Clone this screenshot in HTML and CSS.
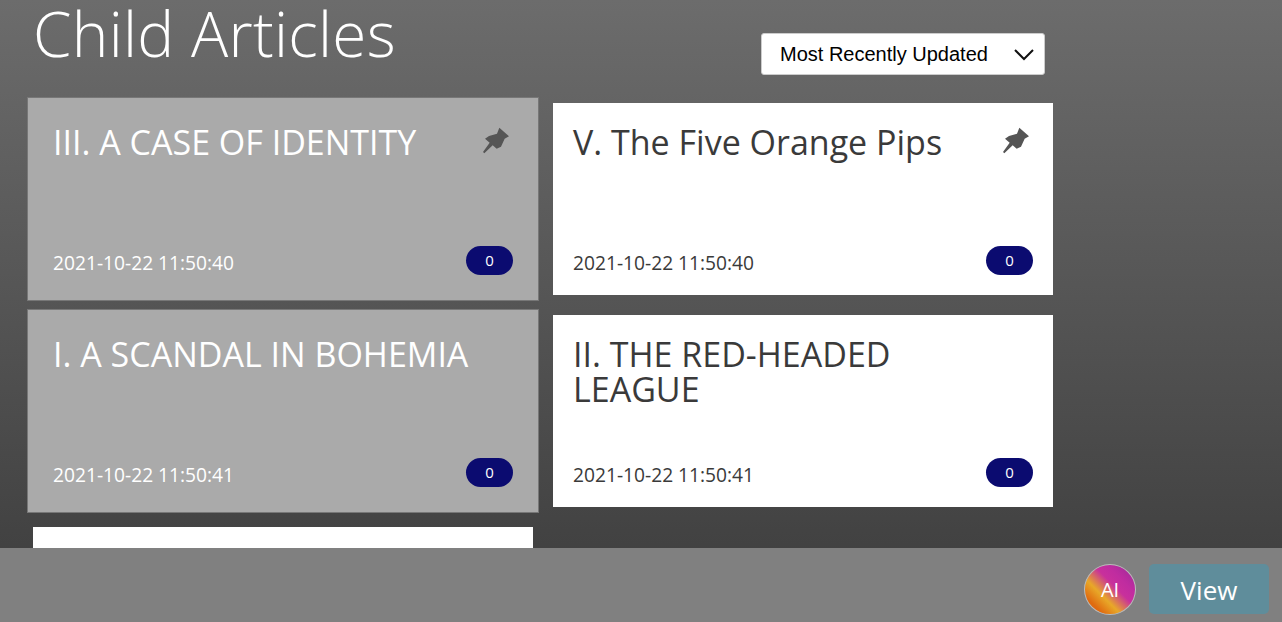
FILE: index.html
```html
<!DOCTYPE html>
<html lang="en">
<head>
    <meta charset="UTF-8">
    <meta name="viewport" content="width=device-width, initial-scale=1.0">
    <title>Child Articles</title>
    <link rel="stylesheet" href="styles.css">
</head>
<body>
    <svg class="icon-defs" width="0" height="0">
        <symbol id="pin" viewBox="65 50 84 81">
            <path d="M117 52L146 78L133 85L122 109L109 115L97 105L72 129L68 125L88 97L74 85L86 77L110 70Z"/>
        </symbol>
    </svg>
    <main class="content">
        <div class="top-row">
            <h1>Child Articles</h1>
            <div class="sort">
                <select class="sort-select">
                    <option>Most Recently Updated</option>
                </select>
                <svg class="chevron" viewBox="0 0 20 12"><path d="M1 1l9 9 9-9"/></svg>
            </div>
        </div>
        <div class="cards">
            <div class="card active">
                <div class="card-head">
                    <h2>III. A CASE OF IDENTITY</h2>
                    <svg class="pin"><use href="#pin"/></svg>
                </div>
                <div class="card-foot">
                    <span class="date">2021-10-22 11:50:40</span>
                    <span class="badge">0</span>
                </div>
            </div>
            <div class="card">
                <div class="card-head">
                    <h2>V. The Five Orange Pips</h2>
                    <svg class="pin"><use href="#pin"/></svg>
                </div>
                <div class="card-foot">
                    <span class="date">2021-10-22 11:50:40</span>
                    <span class="badge">0</span>
                </div>
            </div>
            <div class="card active">
                <div class="card-head">
                    <h2>I. A SCANDAL IN BOHEMIA</h2>
                </div>
                <div class="card-foot">
                    <span class="date">2021-10-22 11:50:41</span>
                    <span class="badge">0</span>
                </div>
            </div>
            <div class="card">
                <div class="card-head">
                    <h2>II. THE RED-HEADED LEAGUE</h2>
                </div>
                <div class="card-foot">
                    <span class="date">2021-10-22 11:50:41</span>
                    <span class="badge">0</span>
                </div>
            </div>
            <div class="card"></div>
        </div>
    </main>
    <footer class="bottom-bar">
        <div class="ai-badge">AI</div>
        <button class="view-btn">View</button>
    </footer>
</body>
</html>
```
FILE: styles.css
```css
html, body {
    height: 100%;
}
body {
    margin: 0;
    font-family: "Open Sans", "Noto Sans", sans-serif;
    display: flex;
    flex-direction: column;
    overflow: hidden;
    background: linear-gradient(#6c6c6c, #3c3c3c);
}
.icon-defs {
    position: absolute;
}
.content {
    height: 548px;
    flex: none;
    overflow: hidden;
    padding: 0 33px;
    box-sizing: border-box;
}
.top-row {
    width: 1012px;
    height: 103px;
    display: flex;
    justify-content: space-between;
    align-items: flex-start;
}
h1 {
    margin: 0;
    font-size: 62px;
    font-weight: 300;
    line-height: 66px;
    color: #fff;
    letter-spacing: 0.3px;
}
.sort {
    position: relative;
    margin-top: 33px;
}
.sort-select {
    display: block;
    appearance: none;
    width: 284px;
    height: 42px;
    padding: 0 18px;
    border: 1px solid #ccc;
    border-radius: 3px;
    background: #fff;
    color: #000;
    font-family: "Liberation Sans", Arial, sans-serif;
    font-size: 20px;
}
.chevron {
    position: absolute;
    right: 11px;
    top: 16px;
    width: 20px;
    height: 12px;
    fill: none;
    stroke: #111;
    stroke-width: 2;
    pointer-events: none;
}
.cards {
    display: grid;
    grid-template-columns: 500px 500px;
    grid-auto-rows: 192px;
    gap: 20px;
}
.card {
    background: #fff;
    color: #3a3a3a;
    padding: 20px;
    box-sizing: border-box;
    display: flex;
    flex-direction: column;
    justify-content: space-between;
}
.card.active {
    margin: -6px;
    padding: 25px;
    background: #aaa;
    border: 1px solid #777;
    color: #fff;
}
.card-head {
    display: flex;
    justify-content: space-between;
    align-items: flex-start;
}
h2 {
    margin: 2px 0 0;
    max-width: 430px;
    font-size: 34px;
    font-weight: 400;
    line-height: 35px;
}
.pin {
    width: 28px;
    height: 27px;
    margin: 4px 3px 0 0;
    flex: none;
    fill: #555;
}
.card-foot {
    display: flex;
    justify-content: space-between;
    align-items: flex-end;
}
.date {
    font-size: 19.2px;
    line-height: 24px;
}
.badge {
    width: 47px;
    height: 29px;
    border-radius: 15px;
    background: #0b0b70;
    color: #fff;
    font-size: 15px;
    line-height: 29px;
    display: flex;
    justify-content: center;
}
.bottom-bar {
    flex: 1;
    background: #808080;
    display: flex;
    justify-content: flex-end;
    align-items: center;
    gap: 13px;
    padding: 8px 13px 0 0;
}
.ai-badge {
    width: 52px;
    height: 51px;
    border-radius: 50%;
    border: 1px solid #bbb;
    box-sizing: border-box;
    background: linear-gradient(45deg, #e06a10 18%, #e8a828 36%, #c8309c 58%, #c02ca0 72%, #9a2a98 100%);
    color: #fff;
    font-size: 20px;
    display: flex;
    align-items: center;
    justify-content: center;
}
.view-btn {
    width: 120px;
    height: 50px;
    border: 0;
    border-radius: 5px;
    padding-top: 3px;
    background: #5f8d9b;
    color: #fff;
    font-family: inherit;
    font-size: 26px;
}
```
